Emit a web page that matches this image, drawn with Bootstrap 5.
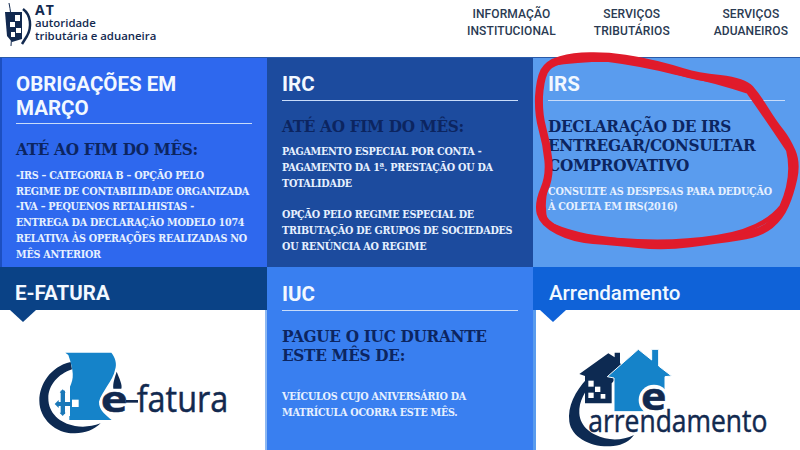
<!DOCTYPE html>
<html lang="pt">
<head>
<meta charset="utf-8">
<link rel="stylesheet" href="https://cdn.jsdelivr.net/npm/bootstrap@5.3.0/dist/css/bootstrap.min.css">
<style>
html,body{margin:0;width:800px;height:450px;overflow:hidden;background:#fff;position:relative;}
.at-head{height:58px;padding-left:3px;}
.at-brand{font-family:"Open Sans","Liberation Sans",sans-serif;color:#12294f;font-size:11.4px;line-height:13px;font-weight:600;padding-top:3px;text-decoration:none;}
.at-brand b{display:block;font-size:14px;line-height:13px;font-weight:700;letter-spacing:1px;}
.at-logo{width:30px;height:44px;flex:none;margin-right:2px;}
.at-link{font-family:Roboto,"Liberation Sans",sans-serif;font-size:12px;line-height:17px;font-weight:500;letter-spacing:.1px;color:#2a3a52;text-align:center;text-decoration:none;padding-top:6px;}
.at-navs{gap:38px;padding-right:12px;}
.at-last{margin-left:6px;}
.at-grid{display:grid;grid-template-columns:267px 266px 267px;grid-template-rows:209px 183px;border-top:1px solid #2a5aa8;margin-top:-1px;}
.tile{padding:15px 15px 0;overflow:hidden;}
.t-obr{background:#2e68ee;border-left:2px solid #1c4fc0;padding-left:14px;}
.t-irc{background:#1c4b9e;}
.t-irs{background:#5a9cee;}
.t-iuc{background:#397ff0;padding-top:16px;}
.t-white{background:#fff;padding:0;position:relative;overflow:visible;}
.t-wl{border-right:2px solid #8db8f2;}
.t-wr{border-left:3px solid #5a9cee;}
.tile-h{font-family:Roboto,"Liberation Sans",sans-serif;font-weight:700;font-size:20.5px;line-height:23.5px;color:#f2f8ff;margin:0;padding-bottom:3px;border-bottom:1px solid #c8dcfa;}
.tile-s{font-family:"DejaVu Serif Condensed","DejaVu Serif",serif;font-weight:700;font-size:17px;line-height:19.7px;letter-spacing:-.3px;color:#0c2560;margin:16px 0 0;}
.tile-p{font-family:"DejaVu Serif Condensed","DejaVu Serif",serif;font-weight:700;font-size:10.7px;line-height:15.8px;letter-spacing:-.25px;color:#e6f0ff;margin:8px 0 0;white-space:nowrap;}
.tile-gap{margin-top:23px;}
.band{height:43px;padding:14px 15px 0;font-family:Roboto,"Liberation Sans",sans-serif;font-weight:700;font-size:20.5px;line-height:24px;color:#f2f8ff;position:relative;margin:0;}
.band::after{content:"";position:absolute;left:10px;bottom:-12px;border-left:13px solid transparent;border-right:13px solid transparent;border-top:12px solid var(--band);}
.band-a{background:#0a4286;--band:#0a4286;margin-right:-2px;}
.band-b{background:#0f62d8;--band:#0f62d8;margin-left:-3px;padding-left:16px;font-weight:500;}
.band-b::after{left:7px;}
.logo-svg{display:block;width:265px;height:140px;}
.arr-logo{width:264px;margin-left:-3px;}
.scribble{position:absolute;left:530px;top:50px;width:270px;height:220px;pointer-events:none;}
.lg-t{font-family:"Open Sans","Liberation Sans",sans-serif;fill:#12294f;stroke:#12294f;stroke-width:1.5;}
</style>
</head>
<body>
<header class="at-head d-flex justify-content-between">
  <a class="at-brand d-flex" href="#">
    <svg class="at-logo" viewBox="0 0 30 44">
      <path d="M6 0 C9 14 9 30 8 43" stroke="#12294f" stroke-width="1" fill="none"/>
      <path d="M2 9 H19 V36 L9 39 L4 33 Z" fill="#12294f"/>
      <path d="M20 6 C28 12 29 24 24 33 L19 41" stroke="#12294f" stroke-width="2.5" fill="none"/>
      <g fill="#fff"><rect x="12" y="12" width="5" height="6"/><rect x="7" y="19" width="5" height="5"/><rect x="13" y="25" width="5" height="5"/><rect x="8" y="29" width="4" height="5"/></g>
    </svg>
    <span><b>AT</b>autoridade<br>tributária e aduaneira</span>
  </a>
  <nav class="at-navs d-flex">
    <a class="at-link" href="#">INFORMAÇÃO<br>INSTITUCIONAL</a>
    <a class="at-link" href="#">SERVIÇOS<br>TRIBUTÁRIOS</a>
    <a class="at-link at-last" href="#">SERVIÇOS<br>ADUANEIROS</a>
  </nav>
</header>
<main class="at-grid">
  <section class="tile t-obr">
    <h2 class="tile-h">OBRIGAÇÕES EM<br>MARÇO</h2>
    <h3 class="tile-s">ATÉ AO FIM DO MÊS:</h3>
    <p class="tile-p">-IRS – CATEGORIA B – OPÇÃO PELO<br>REGIME DE CONTABILIDADE ORGANIZADA<br>-IVA – PEQUENOS RETALHISTAS -<br>ENTREGA DA DECLARAÇÃO MODELO 1074<br>RELATIVA ÀS OPERAÇÕES REALIZADAS NO<br>MÊS ANTERIOR</p>
  </section>
  <section class="tile t-irc">
    <h2 class="tile-h">IRC</h2>
    <h3 class="tile-s">ATÉ AO FIM DO MÊS:</h3>
    <p class="tile-p">PAGAMENTO ESPECIAL POR CONTA -<br>PAGAMENTO DA 1ª. PRESTAÇÃO OU DA<br>TOTALIDADE<br><br>OPÇÃO PELO REGIME ESPECIAL DE<br>TRIBUTAÇÃO DE GRUPOS DE SOCIEDADES<br>OU RENÚNCIA AO REGIME</p>
  </section>
  <section class="tile t-irs">
    <h2 class="tile-h">IRS</h2>
    <h3 class="tile-s">DECLARAÇÃO DE IRS<br>ENTREGAR/CONSULTAR<br>COMPROVATIVO</h3>
    <p class="tile-p">CONSULTE AS DESPESAS PARA DEDUÇÃO<br>À COLETA EM IRS(2016)</p>
  </section>
  <section class="tile t-white t-wl">
    <h2 class="band band-a">E-FATURA</h2>
    <svg class="logo-svg" viewBox="0 120 795 420">
      <path d="M212 276 C150 290 118 345 118 392 C118 448 170 492 225 490 C255 489 282 480 302 460 C275 470 250 472 225 468 C180 460 145 430 145 385 C145 345 175 312 216 298 Z" fill="#0d2a52"/>
      <path d="M196 248 H334 C345 262 352 280 345 300 C340 330 305 365 297 395 C296 420 318 435 335 450 H208 V436 H210 V350 C222 325 222 305 205 255 Z" fill="#1583c9"/>
      <path d="M350 305 C358 325 368 345 364 356 L340 356 C338 340 345 320 350 305 Z" fill="#0d2a52"/>
      <g fill="#fff"><rect x="178" y="362" width="32" height="76"/><rect x="163" y="388" width="47" height="26"/></g>
      <g fill="#1a78b8"><rect x="182" y="362" width="13" height="70"/><rect x="172" y="396" width="42" height="12"/><path d="M164 402 L176 390 V414 Z"/><path d="M188 358 L197 368 H179 Z"/><path d="M188 438 L197 428 H179 Z"/></g>
      <rect x="216" y="389" width="20" height="22" fill="#fff"/>
      <circle cx="343" cy="400" r="38" fill="#fff"/>
      <text class="lg-t" transform="translate(302 426) scale(1.3 1)" font-size="105" font-weight="700">e</text>
      <rect x="378" y="390" width="36" height="8" fill="#12294f"/>
      <text class="lg-t" x="410" y="425" font-size="112" textLength="275" lengthAdjust="spacingAndGlyphs">fatura</text>
    </svg>
  </section>
  <section class="tile t-iuc">
    <h2 class="tile-h">IUC</h2>
    <h3 class="tile-s">PAGUE O IUC DURANTE<br>ESTE MÊS DE:</h3>
    <p class="tile-p tile-gap">VEÍCULOS CUJO ANIVERSÁRIO DA<br>MATRÍCULA OCORRA ESTE MÊS.</p>
  </section>
  <section class="tile t-white t-wr">
    <h2 class="band band-b">Arrendamento</h2>
    <svg class="logo-svg arr-logo" viewBox="9 120 792 420">
      <path d="M172 325 C135 365 112 410 118 455 C125 505 190 535 250 528 C280 525 300 512 312 495 C285 508 255 512 225 505 C185 495 150 470 148 430 C146 395 165 360 190 340 Z" fill="#0d2a52"/>
      <path d="M148 312 L235 250 L254 262 V248 H270 V280 L288 295 L245 340 V400 H165 V318 Z" fill="#0d2a52"/>
      <g fill="#fff"><rect x="175" y="332" width="16" height="18"/><rect x="195" y="350" width="16" height="16"/><rect x="175" y="368" width="16" height="16"/><rect x="212" y="372" width="14" height="14"/></g>
      <path d="M325 238 L365 270 V238 H386 V288 L425 318 L405 320 V425 H252 V324 L232 320 Z" fill="#1583c9" stroke="#fff" stroke-width="3"/>
      <circle cx="372" cy="390" r="46" fill="#fff"/>
      <text class="lg-t" transform="translate(333 420) scale(1.15 1)" font-size="112" font-weight="700">e</text>
      <text class="lg-t" x="175" y="485" font-size="94" textLength="537" lengthAdjust="spacingAndGlyphs">arrendamento</text>
    </svg>
  </section>
</main>
<svg class="scribble" viewBox="0 0 810 660" fill="none" stroke="#e01b2b" stroke-linecap="round" stroke-linejoin="round">
  <path stroke-width="24" d="M92 30 Q130 20 180 19 Q230 18 285 26 Q340 35 380 45 Q420 55 460 67 Q500 80 570 87 Q640 95 660 117 Q680 140 705 180 Q730 220 750 245 Q770 270 785 305 Q800 340 790 385 Q780 430 765 465 Q750 500 720 525 Q690 550 625 560 Q560 570 480 580 Q400 590 325 582 Q250 575 190 570 Q130 565 85 542 Q40 520 32 490 Q25 460 42 420 Q60 380 55 330 Q50 280 37 235 Q25 190 27 140 Q30 90 42 65 Q55 40 92 30"/>
  <path stroke-width="14" d="M60 42 Q140 28 230 28 Q340 42 440 68 Q560 92 655 125 Q705 195 775 300 Q795 380 755 470 Q700 540 560 562 Q420 584 260 570 Q130 560 48 518 Q32 470 50 400 Q64 330 42 250 Q20 170 38 80"/>
</svg>
<script src="https://cdn.jsdelivr.net/npm/bootstrap@5.3.0/dist/js/bootstrap.bundle.min.js"></script>
</body>
</html>
